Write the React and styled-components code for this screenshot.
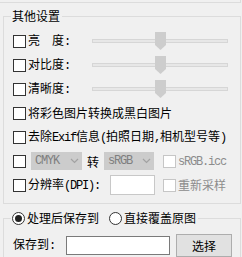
import styled, { createGlobalStyle } from "styled-components";

const Global = createGlobalStyle`
  html, body {
    margin: 0;
    padding: 0;
    background: #f0f0f0;
  }
  body {
    font-family: "Noto Sans CJK SC", "Liberation Sans", sans-serif;
    font-size: 12px;
    color: #000;
  }
`;

const Panel = styled.div`
  width: 242px;
  height: 257px;
  overflow: hidden;
  background: #f0f0f0;
`;

const PrevTail = styled.div`
  height: 2px;
  margin-right: 1px;
  border-right: 1px solid #dcdcdc;
  border-bottom: 1px solid #dcdcdc;
`;

const Group = styled.fieldset`
  margin: ${(p) => p.$top}px 1px 0 3px;
  padding: ${(p) => p.$padTop}px 0 ${(p) => p.$padBottom}px 9px;
  border: 1px solid #dcdcdc;
  min-width: 0;
`;

const Title = styled.legend`
  margin-left: -2px;
  padding: 0 2px 0 1px;
  line-height: 14px;
  height: 14px;
  display: flex;
  align-items: center;
  gap: ${(p) => p.$gap || 0}px;
`;

const Row = styled.div`
  display: flex;
  align-items: center;
  height: 24px;
`;

const Box = styled.span`
  display: inline-block;
  flex: none;
  box-sizing: border-box;
  width: 13px;
  height: 13px;
  border: 1px solid ${(p) => (p.$disabled ? "#c6c6c6" : "#333")};
  background: #fff;
  margin: ${(p) => p.$margin || "0 2px 0 0"};
`;

const Label = styled.span`
  width: ${(p) => (p.$width ? `${p.$width}px` : "auto")};
  flex: none;
  white-space: nowrap;
  color: ${(p) => (p.$muted ? "#8c8c8c" : "#000")};
  line-height: 14px;
`;

const Lat = styled.span`
  font-family: "Liberation Mono", monospace;
  letter-spacing: -1.2px;
`;

const Track = styled.div`
  position: relative;
  width: 136px;
  height: 4px;
  box-sizing: border-box;
  background: #e7e7e7;
  border: 1px solid #d6d6d6;
`;

const Thumb = styled.span`
  position: absolute;
  top: -8px;
  width: 11px;
  height: 18px;
  background: #cdcdcd;
  clip-path: polygon(0 0, 100% 0, 100% 72%, 50% 100%, 0 72%);
`;

const Combo = styled.div`
  display: flex;
  align-items: center;
  justify-content: space-between;
  box-sizing: border-box;
  width: ${(p) => p.$width}px;
  height: 18px;
  padding: 0 3px 0 4px;
  margin: ${(p) => p.$margin};
  background: #cccccc;
  color: #7e7e7e;
`;

const Word = styled.span`
  margin: 0 5px;
`;

const Field = styled.div`
  box-sizing: border-box;
  width: ${(p) => p.$width}px;
  height: ${(p) => p.$height}px;
  margin: ${(p) => p.$margin};
  background: #fff;
  border: 1px solid ${(p) => p.$border};
`;

const Radio = styled.span`
  position: relative;
  display: inline-block;
  flex: none;
  box-sizing: border-box;
  width: 13px;
  height: 13px;
  border-radius: 50%;
  border: 1px solid #333;
  background: #fff;
  margin-right: 2px;
  &::after {
    content: "";
    display: ${(p) => (p.$checked ? "block" : "none")};
    position: absolute;
    left: 2px;
    top: 2px;
    width: 7px;
    height: 7px;
    border-radius: 50%;
    background: #222;
  }
`;

const Option = styled.span`
  display: flex;
  align-items: center;
`;

const Button = styled.div`
  display: flex;
  align-items: center;
  justify-content: center;
  box-sizing: border-box;
  width: 56px;
  height: 23px;
  margin-left: 6px;
  background: #e1e1e1;
  border: 1px solid #adadad;
`;

const Chevron = () => (
  <svg width="9" height="6" viewBox="0 0 9 6">
    <path d="M1 1 L4.5 4.5 L8 1" fill="none" stroke="#a2a2a2" strokeWidth="1.2" />
  </svg>
);

const Slider = ({ value }) => (
  <Track>
    <Thumb style={{ left: Math.round(value * (136 - 11)) - 1 }} />
  </Track>
);

const sliders = [
  { label: "亮　度", value: 0.5 },
  { label: "对比度", value: 0.5 },
  { label: "清晰度", value: 0.5 },
];

export default function App() {
  return (
    <Panel>
      <Global />
      <PrevTail />
      <Group $top={6} $padTop={6} $padBottom={6}>
        <Title>其他设置</Title>
        {sliders.map((s) => (
          <Row key={s.label}>
            <Box />
            <Label $width={64}>
              {s.label}
              <Lat>:</Lat>
            </Label>
            <Slider value={s.value} />
          </Row>
        ))}
        <Row>
          <Box />
          <Label>将彩色图片转换成黑白图片</Label>
        </Row>
        <Row>
          <Box />
          <Label>
            去除<Lat>Exif</Lat>信息<Lat>(</Lat>拍照日期<Lat>,</Lat>相机型号等<Lat>)</Lat>
          </Label>
        </Row>
        <Row>
          <Box />
          <Combo $width={51} $margin="0 0 0 3px">
            <Lat>CMYK</Lat>
            <Chevron />
          </Combo>
          <Word>转</Word>
          <Combo $width={50} $margin="0">
            <Lat>sRGB</Lat>
            <Chevron />
          </Combo>
          <Box $disabled $margin="0 2px 0 9px" />
          <Label $muted>
            <Lat>sRGB.icc</Lat>
          </Label>
        </Row>
        <Row>
          <Box />
          <Label>
            分辨率<Lat>(DPI):</Lat>
          </Label>
          <Field $width={45} $height={20} $border="#c8c8c8" $margin="0 0 0 10px" />
          <Box $disabled $margin="0 2px 0 8px" />
          <Label $muted>重新采样</Label>
        </Row>
      </Group>
      <Group $top={7} $padTop={8} $padBottom={20}>
        <Title $gap={10}>
          <Option>
            <Radio $checked />
            处理后保存到
          </Option>
          <Option>
            <Radio />
            直接覆盖原图
          </Option>
        </Title>
        <Row>
          <Label $width={53}>
            保存到<Lat>:</Lat>
          </Label>
          <Field $width={104} $height={19} $border="#7a7a7a" $margin="0" />
          <Button>选择</Button>
        </Row>
      </Group>
    </Panel>
  );
}
